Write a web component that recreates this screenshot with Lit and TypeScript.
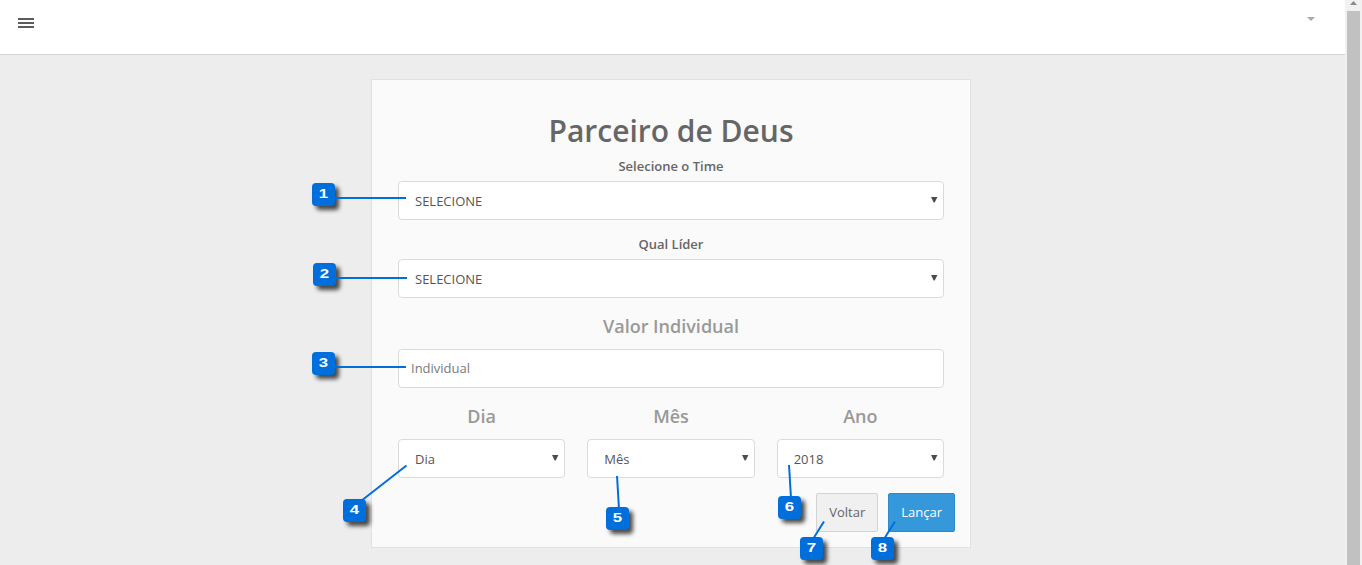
import { LitElement, html, svg, css } from "lit";
import { customElement, property } from "lit/decorators.js";

interface Marker {
  n: number;
  x: number;
  y: number;
  from: [number, number];
  to: [number, number];
}

const markers: Marker[] = [
  { n: 1, x: 312, y: 183, from: [334, 198], to: [406, 198] },
  { n: 2, x: 313, y: 263, from: [335, 278], to: [407, 278] },
  { n: 3, x: 312, y: 352, from: [334, 367], to: [406, 367] },
  { n: 4, x: 343, y: 499, from: [361, 501], to: [406.5, 465.5] },
  { n: 5, x: 606, y: 507, from: [619, 509], to: [617, 476] },
  { n: 6, x: 778, y: 496, from: [791, 498], to: [789, 465] },
  { n: 7, x: 800, y: 537, from: [813, 539], to: [824, 521.5] },
  { n: 8, x: 871, y: 537, from: [884, 539], to: [895, 521.5] },
];

@customElement("select-box")
class SelectBox extends LitElement {
  @property() value = "";

  static styles = css`
    :host {
      display: flex;
      align-items: center;
      justify-content: space-between;
      box-sizing: border-box;
      height: 39px;
      padding: 1px 5px 0 16px;
      border: 1px solid #dbdbdb;
      border-radius: 4px;
      background: #fff;
      color: #555;
      font-size: 13px;
    }
    .arrow {
      display: block;
      margin-bottom: 2px;
    }
  `;

  render() {
    return html`<span>${this.value}</span>
      <svg class="arrow" width="7" height="6" viewBox="0 0 7 6">
        <path d="M0 0H6.4L3.7 5.6H2.7Z" fill="#4c4c4c" />
      </svg>`;
  }
}

@customElement("app-root")
class AppRoot extends LitElement {
  static styles = css`
    :host {
      position: relative;
      display: flex;
      height: 565px;
      overflow: hidden;
      background: #ededed;
      color: #666;
      font: 13px "Open Sans", sans-serif;
    }
    .page {
      flex: 1;
      min-width: 0;
    }
    .header {
      display: flex;
      justify-content: space-between;
      box-sizing: border-box;
      height: 55px;
      padding: 18px 30px 0 18px;
      border-bottom: 1px solid #d3d3d3;
      background: #fff;
    }
    .caret {
      margin-top: -1px;
    }
    .card {
      box-sizing: border-box;
      width: 600px;
      height: 469px;
      margin: 24px auto 0 371px;
      padding: 31px 26px 0;
      border: 1px solid #e1e1e1;
      background: #fafafa;
      text-align: center;
    }
    .title {
      margin: 0;
      font-size: 30px;
      font-weight: 600;
      line-height: 40px;
    }
    .label {
      display: block;
      margin: 5px 0 5px;
      font-weight: 600;
      line-height: 20px;
    }
    .label.next {
      margin-top: 14px;
    }
    .heading {
      margin: 0;
      color: #999;
      font-size: 18px;
      font-weight: 600;
      line-height: 24px;
    }
    .amount {
      margin: 16px 0 11px;
    }
    .input {
      display: flex;
      align-items: center;
      box-sizing: border-box;
      height: 39px;
      padding: 0 12px 1px;
      border: 1px solid #dbdbdb;
      border-radius: 4px;
      background: #fff;
      color: #7a7a7a;
    }
    .date {
      display: grid;
      grid-template-columns: repeat(3, 1fr);
      gap: 22px;
      margin-top: 16px;
    }
    .date .heading {
      margin-bottom: 11px;
    }
    .actions {
      display: flex;
      justify-content: flex-end;
      gap: 10px;
      margin: 15px -11px 0 0;
    }
    .button {
      box-sizing: border-box;
      height: 39px;
      padding: 0 12px;
      border: 1px solid #d3d3d3;
      border-radius: 2px;
      background: #f0f0f0;
      color: #666;
      font: inherit;
      line-height: 37px;
    }
    .primary {
      border-color: #2f8ac7;
      background: #3498db;
      color: #fff;
    }
    .scrollbar {
      display: flex;
      flex-direction: column;
      align-items: center;
      width: 17px;
      background: #f1f1f1;
    }
    .up {
      display: block;
      margin: 1px 0 6px;
      flex: none;
    }
    .thumb {
      flex: 1;
      width: 13px;
      background: #c1c1c1;
    }
    .lines {
      position: absolute;
      left: 0;
      top: 0;
      pointer-events: none;
    }
    .marker {
      position: absolute;
      width: 23px;
      height: 23px;
      border-radius: 4px;
      background: #006fdc;
      box-shadow: 4px 4px 4px rgba(0, 0, 0, 0.7);
      color: #fff;
      font: bold 12px/22px "Liberation Sans", sans-serif;
      text-align: center;
    }
    .digit {
      display: block;
      transform: scaleX(1.4);
    }
  `;

  render() {
    return html`
      <div class="page">
        <header class="header">
          <svg width="16" height="10" viewBox="0 0 16 10">
            <path d="M0 1H16M0 5H16M0 9H16" stroke="#5c5c5c" stroke-width="2" />
          </svg>
          <svg class="caret" width="8" height="5" viewBox="0 0 8 5">
            <path d="M0 0H8L4 4Z" fill="#aaa" />
          </svg>
        </header>
        <main class="card">
          <h1 class="title">Parceiro de Deus</h1>
          <span class="label">Selecione o Time</span>
          <select-box value="SELECIONE"></select-box>
          <span class="label next">Qual Líder</span>
          <select-box value="SELECIONE"></select-box>
          <h2 class="heading amount">Valor Individual</h2>
          <div class="input">Individual</div>
          <div class="date">
            ${[["Dia", "Dia"], ["Mês", "Mês"], ["Ano", "2018"]].map(
              ([name, value]) => html`<div>
                <h2 class="heading">${name}</h2>
                <select-box .value=${value}></select-box>
              </div>`
            )}
          </div>
          <div class="actions">
            <button class="button">Voltar</button>
            <button class="button primary">Lançar</button>
          </div>
        </main>
      </div>
      <div class="scrollbar">
        <svg class="up" width="7" height="4" viewBox="0 0 7 4">
          <path d="M0 4L3.5 0L7 4Z" fill="#8a8a8a" />
        </svg>
        <div class="thumb"></div>
      </div>
      ${markers.map(
        (m) => html`<div class="marker" style="left:${m.x}px;top:${m.y}px">
          <span class="digit">${m.n}</span>
        </div>`
      )}
      <svg class="lines" width="1362" height="565">
        ${markers.map(
          (m) => svg`<line x1=${m.from[0]} y1=${m.from[1]} x2=${m.to[0]} y2=${m.to[1]}
            stroke="#006fdc" stroke-width="2" />`
        )}
      </svg>
    `;
  }
}
